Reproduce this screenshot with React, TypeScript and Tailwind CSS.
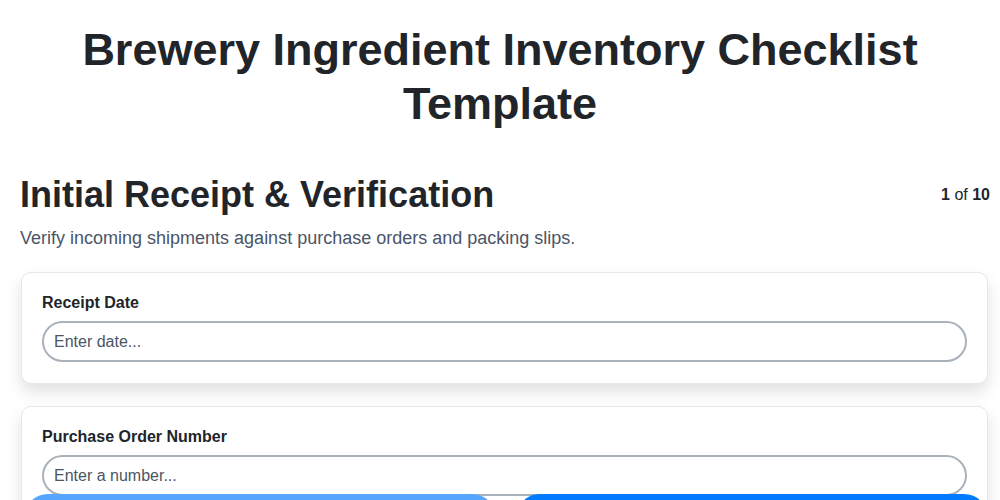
const fields = [
  { label: "Receipt Date", placeholder: "Enter date..." },
  { label: "Purchase Order Number", placeholder: "Enter a number..." },
  { label: "Supplier Name", placeholder: "Enter text..." },
];

export default function App() {
  return (
    <div className="min-h-screen bg-white font-['Liberation_Sans',Arial,sans-serif] text-[#212529]">
      <h1 className="pt-[23px] px-10 text-center text-[45px] font-bold leading-[54px]">
        Brewery Ingredient Inventory Checklist Template
      </h1>

      <div className="pl-5 pr-[10px] pt-[40px]">
        <div className="flex items-start justify-between">
          <h2 className="text-[36px] font-bold leading-[48px]">
            Initial Receipt &amp; Verification
          </h2>
          <div className="pt-[12px] text-base">
            <span className="font-bold">1</span> of{" "}
            <span className="font-bold">10</span>
          </div>
        </div>
        <p className="mt-[5px] text-[18px] leading-[28px] text-[#4a5568]">
          Verify incoming shipments against purchase orders and packing slips.
        </p>

        <div className="mt-[20px] mr-[2px] ml-px flex flex-col gap-[22px] pb-24">
          {fields.map((f) => (
            <div
              key={f.label}
              className="rounded-[10px] border border-[#e5e7eb] bg-white px-5 pt-[18px] pb-[21px] shadow-[0_8px_16px_rgba(0,0,0,0.12)]"
            >
              <label className="mb-[6px] block text-base font-bold leading-6">
                {f.label}
              </label>
              <input
                placeholder={f.placeholder}
                className="block h-[41px] w-full rounded-full border-2 border-[#a9b1ba] px-[10px] text-base text-[#212529] outline-none placeholder:text-[#4b5563]"
              />
            </div>
          ))}
        </div>
      </div>

      <div className="fixed top-[494px] left-[24px] right-[12px] flex gap-5">
        <button className="h-12 flex-1 rounded-full bg-[#56a5ff] text-base font-bold text-white">
          Previous
        </button>
        <button className="h-12 flex-1 rounded-full bg-[#007bff] text-base font-bold text-white">
          Next
        </button>
      </div>
    </div>
  );
}
